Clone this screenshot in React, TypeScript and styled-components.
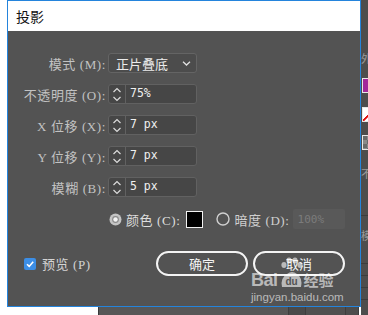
import React from "react";
import styled, { createGlobalStyle } from "styled-components";

const Global = createGlobalStyle`
  html, body { margin: 0; padding: 0; background: #ffffff; }
  body { font-family: "Noto Sans CJK SC", "Noto Sans", sans-serif; }
  * { box-sizing: border-box; }
`;

const Page = styled.div`
  display: flex;
  width: 368px;
  height: 315px;
  overflow: hidden;
  background: #ffffff;
`;

const LeftGutter = styled.div`
  width: 7px;
  flex: none;
  background: #ffffff;
`;

const Center = styled.div`
  width: 354px;
  flex: none;
  display: flex;
  flex-direction: column;
`;

const Dialog = styled.div`
  position: relative;
  height: 307px;
  border: 1px solid #2484dc;
  background: #535353;
  display: flex;
  flex-direction: column;
`;

const TitleBar = styled.div`
  height: 30px;
  background: #ffffff;
  display: flex;
  align-items: center;
  padding-left: 8px;
  font-size: 14px;
  color: #111;
  font-family: "Noto Sans CJK SC", sans-serif;
`;

const Body = styled.div`
  padding-top: 22px;
  display: flex;
  flex-direction: column;
`;

const FormGrid = styled.div`
  display: grid;
  grid-template-columns: 98px 89px;
  column-gap: 2px;
  row-gap: 11px;
  grid-auto-rows: 20px;
`;

const Label = styled.div<{ $bright?: boolean }>`
  display: flex;
  align-items: center;
  justify-content: flex-end;
  white-space: nowrap;
  font-family: "Liberation Serif", "Noto Sans CJK SC", serif;
  font-size: 13px;
  letter-spacing: 0.6px;
  color: ${(p) => (p.$bright ? "#dadada" : "#c2c2c2")};
`;

const SelectBox = styled.div`
  display: flex;
  align-items: center;
  justify-content: space-between;
  border: 1px solid #646464;
  border-radius: 3px;
  background: #4c4c4c;
  padding: 0 5px 0 7px;
  font-size: 13px;
  color: #ececec;
  font-family: "Noto Sans CJK SC", sans-serif;
`;

const NumberBox = styled.div`
  display: flex;
  border: 1px solid #616161;
  border-radius: 3px;
  background: #464646;
  overflow: hidden;
`;

const Spinner = styled.div`
  width: 17px;
  flex: none;
  border-right: 1px solid #616161;
  display: flex;
  align-items: center;
  justify-content: center;
`;

const Value = styled.div`
  flex: 1;
  padding-left: 4px;
  display: flex;
  align-items: center;
  font-family: "DejaVu Sans Mono", "Liberation Mono", monospace;
  font-size: 11.5px;
  color: #f0f0f0;
  padding-bottom: 3px;
`;

const RadioRow = styled.div`
  margin-top: 12px;
  margin-left: 101px;
  height: 20px;
  display: flex;
  align-items: center;
`;

const RadioText = styled.span<{ $muted?: boolean }>`
  font-family: "Liberation Serif", "Noto Sans CJK SC", serif;
  font-size: 13px;
  letter-spacing: 0.6px;
  color: ${(p) => (p.$muted ? "#cfcfcf" : "#dedede")};
  margin-left: 4px;
  white-space: nowrap;
`;

const Swatch = styled.div`
  width: 17px;
  height: 17px;
  background: #000;
  border: 1.5px solid #f2f2f2;
  margin-left: 6px;
  margin-right: 13px;
  flex: none;
`;

const DisabledBox = styled.div`
  width: 52px;
  height: 20px;
  margin-left: 3px;
  background: #595959;
  border-radius: 2px;
  display: flex;
  align-items: center;
  padding-left: 5px;
  font-family: "DejaVu Sans Mono", monospace;
  font-size: 11px;
  color: #7c7c7c;
`;

const Footer = styled.div`
  margin-top: 22px;
  height: 25px;
  display: flex;
  align-items: center;
  padding: 0 15px 0 16px;
`;

const CheckBox = styled.div`
  width: 12px;
  height: 12px;
  border-radius: 2px;
  background: #3c8ee6;
  display: flex;
  align-items: center;
  justify-content: center;
  flex: none;
`;

const CheckLabel = styled.span`
  margin-left: 6px;
  font-family: "Liberation Serif", "Noto Sans CJK SC", serif;
  font-size: 13px;
  letter-spacing: 0.6px;
  color: #d4d4d4;
`;

const ButtonGroup = styled.div`
  margin-left: auto;
  display: flex;
  gap: 5px;
`;

const PillButton = styled.div`
  width: 92px;
  height: 25px;
  border: 2px solid #f4f4f4;
  border-radius: 13px;
  display: flex;
  align-items: center;
  justify-content: center;
  font-size: 13px;
  color: #f4f4f4;
  font-family: "Noto Sans CJK SC", sans-serif;
`;

const Watermark = styled.div`
  position: absolute;
  left: 243px;
  top: 256px;
  display: flex;
  flex-direction: column;
  align-items: flex-start;
  color: rgba(255, 255, 255, 0.6);
  pointer-events: none;
`;

const WmLogo = styled.div`
  display: flex;
  align-items: flex-end;
  height: 31px;
`;

const WmBai = styled.span`
  font-family: "Liberation Sans", sans-serif;
  font-weight: bold;
  font-size: 18px;
  line-height: 16px;
  letter-spacing: -0.5px;
`;

const WmCn = styled.span`
  font-family: "Noto Sans CJK SC", sans-serif;
  font-weight: bold;
  font-size: 15px;
  line-height: 17px;
  margin-left: 1px;
`;

const WmUrl = styled.span`
  font-family: "Liberation Sans", sans-serif;
  font-size: 11.5px;
  line-height: 13px;
  margin-top: 3px;
`;

const BelowStrip = styled.div`
  height: 8px;
  display: flex;
`;

const BelowWhite = styled.div`
  width: 92px;
  background: #ffffff;
  border-right: 1px solid #3a3a3a;
`;

const BelowGrey = styled.div<{ $w: number; $c: string }>`
  width: ${(p) => p.$w}px;
  background: ${(p) => p.$c};
  border-right: 1px solid #3e3e3e;
`;

const RightPanel = styled.div`
  width: 7px;
  flex: none;
  background: #4d4d4d;
  display: flex;
  flex-direction: column;
  overflow: hidden;
`;

const PanelGlyph = styled.span<{ $top: number }>`
  margin-top: ${(p) => p.$top}px;
  font-size: 11px;
  line-height: 12px;
  color: #9a9a9a;
  white-space: nowrap;
  font-family: "Noto Sans CJK SC", sans-serif;
`;

const PanelSwatch = styled.div<{ $top: number; $bg: string }>`
  margin-top: ${(p) => p.$top}px;
  margin-left: 1px;
  width: 14px;
  height: 15px;
  border: 1px solid #e8e8e8;
  background: ${(p) => p.$bg};
  flex: none;
`;

const PanelLine = styled.div<{ $top: number }>`
  margin-top: ${(p) => p.$top}px;
  height: 1px;
  background: #3c3c3c;
  flex: none;
`;

const Chevron = ({ up }: { up?: boolean }) => (
  <svg width="9" height="5" viewBox="0 0 9 5">
    <path
      d={up ? "M1 4.2 L4.5 1 L8 4.2" : "M1 0.8 L4.5 4 L8 0.8"}
      fill="none"
      stroke="#e0e0e0"
      strokeWidth="1.3"
    />
  </svg>
);

const SpinIcon = () => (
  <svg width="10" height="15" viewBox="0 0 10 15">
    <path d="M1.5 5 L5 1.6 L8.5 5" fill="none" stroke="#dcdcdc" strokeWidth="1.2" />
    <path d="M1.5 10 L5 13.4 L8.5 10" fill="none" stroke="#dcdcdc" strokeWidth="1.2" />
  </svg>
);

const NumberField = ({ value }: { value: string }) => (
  <NumberBox>
    <Spinner>
      <SpinIcon />
    </Spinner>
    <Value>{value}</Value>
  </NumberBox>
);

const RadioOn = () => (
  <svg width="13" height="13" viewBox="0 0 13 13">
    <circle cx="6.5" cy="6.5" r="6" fill="#c4c4c4" />
    <circle cx="6.5" cy="6.5" r="3.4" fill="#8a8a8a" />
    <circle cx="6.5" cy="6.5" r="2.2" fill="#f4f4f4" />
  </svg>
);

const RadioOff = () => (
  <svg width="14" height="14" viewBox="0 0 14 14">
    <circle cx="7" cy="7" r="6" fill="none" stroke="#d0d0d0" strokeWidth="1.4" />
  </svg>
);

const Check = () => (
  <svg width="10" height="10" viewBox="0 0 10 10">
    <path d="M2 5.2 L4.2 7.4 L8.2 2.8" fill="none" stroke="#ffffff" strokeWidth="1.6" />
  </svg>
);

const Paw = () => (
  <svg width="24" height="31" viewBox="0 0 24 31" style={{ marginLeft: 1 }}>
    <g fill="rgba(255,255,255,0.6)">
      <ellipse cx="5" cy="8" rx="2.6" ry="3" />
      <ellipse cx="10" cy="3.5" rx="2.6" ry="3" />
      <ellipse cx="16" cy="3.5" rx="2.6" ry="3" />
      <ellipse cx="21" cy="8" rx="2.6" ry="3" />
      <path d="M3 30 Q1 21 8 17 Q13 13 18 17 Q24 21 22 30 Z" />
    </g>
    <text x="12.5" y="28" textAnchor="middle" fontFamily="Liberation Sans, sans-serif" fontWeight="bold" fontSize="10" fill="#535353">du</text>
  </svg>
);

export default function App() {
  return (
    <>
      <Global />
      <Page>
        <LeftGutter />
        <Center>
          <Dialog>
            <TitleBar>投影</TitleBar>
            <Body>
              <FormGrid>
                <Label>模式 (M):</Label>
                <SelectBox>
                  <span>正片叠底</span>
                  <Chevron />
                </SelectBox>
                <Label>不透明度 (O):</Label>
                <NumberField value="75%" />
                <Label>X 位移 (X):</Label>
                <NumberField value="7 px" />
                <Label>Y 位移 (Y):</Label>
                <NumberField value="7 px" />
                <Label>模糊 (B):</Label>
                <NumberField value="5 px" />
              </FormGrid>
              <RadioRow>
                <RadioOn />
                <RadioText>颜色 (C):</RadioText>
                <Swatch />
                <RadioOff />
                <RadioText $muted>暗度 (D):</RadioText>
                <DisabledBox>100%</DisabledBox>
              </RadioRow>
              <Footer>
                <CheckBox>
                  <Check />
                </CheckBox>
                <CheckLabel>预览 (P)</CheckLabel>
                <ButtonGroup>
                  <PillButton>确定</PillButton>
                  <PillButton>取消</PillButton>
                </ButtonGroup>
              </Footer>
            </Body>
            <Watermark>
              <WmLogo>
                <WmBai>Bai</WmBai>
                <Paw />
                <WmCn>经验</WmCn>
              </WmLogo>
              <WmUrl>jingyan.baidu.com</WmUrl>
            </Watermark>
          </Dialog>
          <BelowStrip>
            <BelowWhite />
            <BelowGrey $w={190} $c="#575757" />
            <BelowGrey $w={17} $c="#4a4a4a" />
            <BelowGrey $w={40} $c="#505050" />
            <BelowGrey $w={13} $c="#4d4d4d" />
          </BelowStrip>
        </Center>
        <RightPanel>
          <PanelGlyph $top={52}>外</PanelGlyph>
          <PanelSwatch $top={14} $bg="#a3289a" />
          <PanelSwatch $top={14} $bg="linear-gradient(135deg, #fff 45%, #e01010 48%, #e01010 55%, #fff 58%)" />
          <PanelSwatch $top={13} $bg="repeating-conic-gradient(#8a8a8a 0 25%, #6a6a6a 0 50%) 0 0 / 8px 8px" />
          <PanelGlyph $top={17}>不</PanelGlyph>
          <PanelLine $top={36} />
          <PanelGlyph $top={13}>模</PanelGlyph>
          <PanelLine $top={22} />
          <PanelLine $top={11} />
          <PanelLine $top={11} />
          <PanelLine $top={11} />
        </RightPanel>
      </Page>
    </>
  );
}
